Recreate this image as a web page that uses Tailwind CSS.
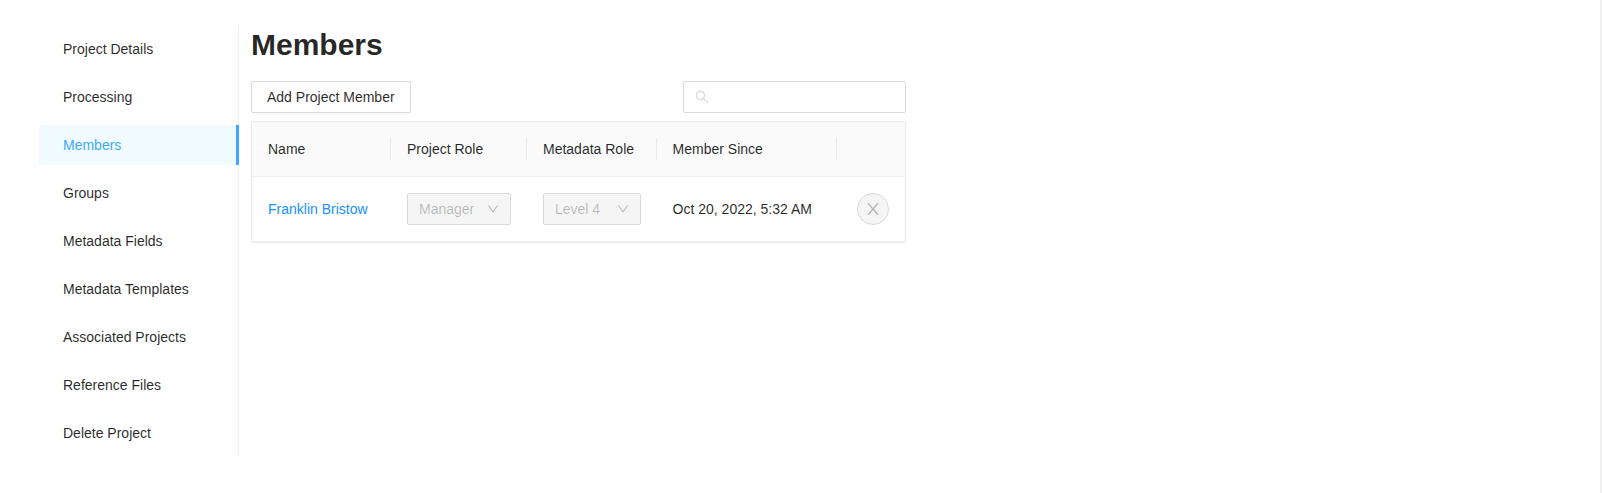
<!DOCTYPE html>
<html lang="en">
<head>
<meta charset="utf-8">
<title>Members</title>
<script src="https://cdn.jsdelivr.net/npm/@tailwindcss/browser@4"></script>
</head>
<body class="h-[493px] overflow-hidden border-r-2 border-[#f0f0f0] bg-white pl-[39px] pt-[25px] font-['Liberation_Sans',Arial,sans-serif] text-[14px] leading-[22px] text-black/85">
<div class="flex items-start gap-3">
  <nav class="flex w-[200px] flex-col gap-2 border-r border-[#f0f0f0] py-1 leading-[40px]">
    <a class="h-10 pl-6">Project Details</a>
    <a class="h-10 pl-6">Processing</a>
    <a class="-mr-px h-10 border-r-3 border-[#40a9ff] bg-[#f0fbff] pl-6 text-[#40a9ff]">Members</a>
    <a class="h-10 pl-6">Groups</a>
    <a class="h-10 pl-6">Metadata Fields</a>
    <a class="h-10 pl-6">Metadata Templates</a>
    <a class="h-10 pl-6">Associated Projects</a>
    <a class="h-10 pl-6">Reference Files</a>
    <a class="h-10 pl-6">Delete Project</a>
  </nav>
  <main class="w-[655px]">
    <h1 class="text-[30px] font-bold leading-[40px]">Members</h1>
    <div class="mt-4 flex justify-between">
      <button class="h-8 rounded-[2px] border border-[#d9d9d9] bg-white px-[15px] shadow-[0_2px_0_rgba(0,0,0,0.015)]">Add Project Member</button>
      <div class="flex h-8 w-[223px] items-center rounded-[2px] border border-[#d9d9d9] pl-[11px] text-[#d9d9d9]">
        <svg class="size-[14px]" viewBox="64 64 896 896" fill="currentColor"><path d="M909.6 854.5L649.900 594.800C690.200 542.700 712 479 712 412c0-80.200-31.300-155.400-87.900-212.100-56.600-56.700-132-87.900-212.100-87.900s-155.500 31.300-212.100 87.900C143.200 256.500 112 331.800 112 412c0 80.100 31.300 155.500 87.900 212.100C256.500 680.800 331.800 712 412 712c67 0 130.600-21.800 182.700-62l259.700 259.600a8.200 8.200 0 0 0 11.600 0l43.600-43.500a8.200 8.200 0 0 0 0-11.600zM570.400 570.400C528 612.700 471.800 636 412 636s-116-23.300-158.400-65.600C211.300 528 188 471.800 188 412s23.300-116.100 65.600-158.400C296 211.300 352.200 188 412 188s116.100 23.200 158.400 65.600S636 352.200 636 412s-23.300 116.100-65.600 158.400z"/></svg>
      </div>
    </div>
    <section class="mt-2 rounded-[2px] border border-[#e8e8e8]">
      <div class="flex h-[55px] items-center border-b border-[#f0f0f0] bg-[#fafafa]">
        <div class="h-[22px] w-[139px] border-r border-[#ebebeb] pl-4">Name</div>
        <div class="h-[22px] w-[136px] border-r border-[#ebebeb] pl-4">Project Role</div>
        <div class="h-[22px] w-[130px] border-r border-[#ebebeb] pl-4">Metadata Role</div>
        <div class="h-[22px] w-[180px] border-r border-[#ebebeb] pl-[15.6px]">Member Since</div>
      </div>
      <div class="flex h-[65px] items-center border-b border-[#f0f0f0]">
        <a class="w-[139px] pl-4 text-[#1890ff]">Franklin Bristow</a>
        <div class="w-[136px] pl-4">
          <div class="flex h-8 w-[104px] items-center justify-between rounded-[2px] border border-[#d9d9d9] bg-[#f5f5f5] px-[11px] text-black/25">
            <span>Manager</span>
            <svg class="size-3" viewBox="64 64 896 896" fill="currentColor"><path d="M884 256h-75c-5.100 0-9.900 2.500-12.900 6.600L512 654.200 227.900 262.600c-3-4.100-7.800-6.600-12.900-6.600h-75c-6.500 0-10.300 7.400-6.500 12.700l352.600 486.100c12.800 17.600 39 17.600 51.700 0l352.600-486.100c3.900-5.300.1-12.700-6.400-12.700z"/></svg>
          </div>
        </div>
        <div class="w-[130px] pl-4">
          <div class="flex h-8 w-[98px] items-center justify-between rounded-[2px] border border-[#d9d9d9] bg-[#f5f5f5] px-[11px] text-black/25">
            <span>Level 4</span>
            <svg class="size-3" viewBox="64 64 896 896" fill="currentColor"><path d="M884 256h-75c-5.100 0-9.900 2.500-12.900 6.600L512 654.200 227.900 262.600c-3-4.100-7.800-6.600-12.900-6.600h-75c-6.500 0-10.300 7.400-6.500 12.700l352.600 486.100c12.800 17.600 39 17.600 51.700 0l352.600-486.100c3.900-5.300.1-12.700-6.400-12.700z"/></svg>
          </div>
        </div>
        <div class="w-[180px] pl-[15.6px]">Oct 20, 2022, 5:32 AM</div>
        <div class="flex w-[68px] justify-end pr-4">
          <button class="flex size-8 items-center justify-center rounded-full border border-[#d9d9d9] bg-[#f5f5f5] text-black/25">
            <svg class="size-4" viewBox="64 64 896 896" fill="currentColor"><path d="M563.800 512l262.500-312.900c4.400-5.200.7-13.100-6.100-13.100h-79.800c-4.700 0-9.200 2.100-12.300 5.700L511.600 449.800 295.100 191.700c-3-3.600-7.500-5.700-12.300-5.700H203c-6.800 0-10.500 7.900-6.100 13.100L459.400 512 196.900 824.900A7.950 7.950 0 0 0 203 838h79.800c4.700 0 9.200-2.100 12.300-5.700l216.500-258.100 216.500 258.100c3 3.600 7.500 5.700 12.300 5.700h79.800c6.800 0 10.500-7.900 6.100-13.100L563.800 512z"/></svg>
          </button>
        </div>
      </div>
    </section>
  </main>
</div>
</body>
</html>
